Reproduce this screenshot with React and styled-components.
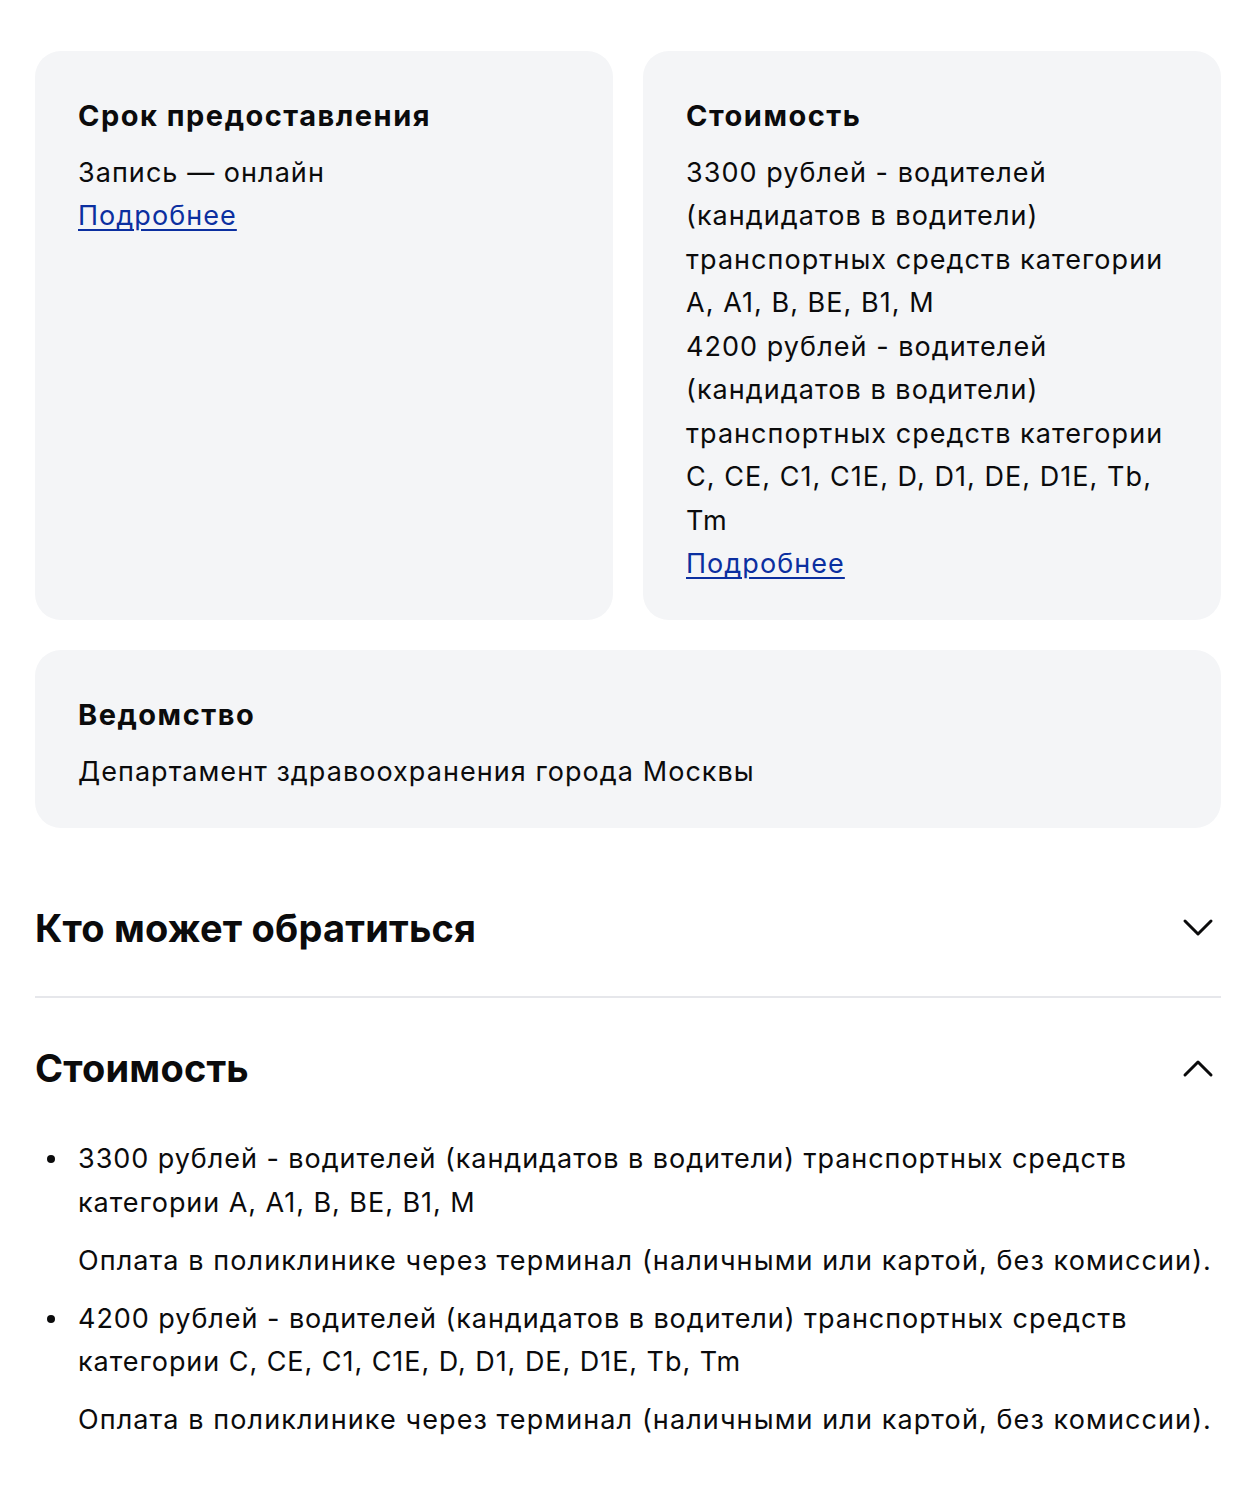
import React from "react";
import styled, { createGlobalStyle } from "styled-components";

const Global = createGlobalStyle`
  html, body { margin: 0; padding: 0; background: #ffffff; }
  body { font-family: Inter, "Noto Sans", "DejaVu Sans", sans-serif; color: #0b0b0c; }
  * { box-sizing: border-box; }
`;

const Page = styled.main`
  width: 1186px;
  margin: 0 0 0 35px;
  padding: 51px 0 40px;
`;

const Grid = styled.div`
  display: grid;
  grid-template-columns: 1fr 1fr;
  gap: 30px;
`;

const Card = styled.section`
  background: #f4f5f7;
  border-radius: 26px;
  padding: 43px 43px 34.8px;
  grid-column: ${(p) => (p.$wide ? "1 / -1" : "auto")};
`;

const CardTitle = styled.h3`
  margin: 0 0 13px;
  font-size: 29px;
  line-height: 43.5px;
  font-weight: 700;
  letter-spacing: 1.5px;
  color: #0b0b0c;
`;

const Text = styled.div`
  font-size: 27px;
  line-height: 43.5px;
  font-weight: 400;
  letter-spacing: 1.05px;
  color: #0b0b0c;
`;

const Link = styled.a`
  color: #0b2fa0;
  text-decoration: underline;
  text-underline-offset: 4px;
  text-decoration-thickness: 2px;
  cursor: pointer;
`;

const Accordion = styled.div`
  margin-top: 30px;
`;

const Item = styled.div`
  border-bottom: ${(p) => (p.$divider ? "2px solid #e6e7eb" : "none")};
`;

const Header = styled.div`
  display: flex;
  align-items: center;
  justify-content: space-between;
  padding: 44px 0 42px;
`;

const Heading = styled.h2`
  margin: 0;
  font-size: 38px;
  line-height: 52px;
  font-weight: 700;
  letter-spacing: 0.2px;
  color: #0b0b0c;
`;

const Chevron = styled.svg`
  width: 36px;
  height: 36px;
  margin-right: 5px;
  flex: none;
`;

const List = styled.ul`
  margin: 1px 0 0;
  padding: 0 0 0 43px;
  list-style: none;
`;

const ListItem = styled.li`
  position: relative;
  font-size: 27px;
  line-height: 43.5px;
  letter-spacing: 0.95px;
  margin-bottom: 14.5px;
  &::before {
    content: "";
    position: absolute;
    left: -31px;
    top: 18px;
    width: 8px;
    height: 8px;
    border-radius: 50%;
    background: #0b0b0c;
  }
`;

const Note = styled.p`
  margin: 14.5px 0 0;
  font-size: 27px;
  line-height: 43.5px;
  letter-spacing: 1.1px;
`;

const Icon = ({ up }) => (
  <Chevron viewBox="0 0 36 36" fill="none">
    <polyline
      points={up ? "5,25 18,12 31,25" : "5,11 18,24 31,11"}
      stroke="#0b0b0c"
      strokeWidth="3"
      strokeLinecap="round"
      strokeLinejoin="round"
    />
  </Chevron>
);

export default function App() {
  return (
    <>
      <Global />
      <Page>
        <Grid>
          <Card>
            <CardTitle>Срок предоставления</CardTitle>
            <Text>Запись — онлайн</Text>
            <Text><Link>Подробнее</Link></Text>
          </Card>
          <Card>
            <CardTitle>Стоимость</CardTitle>
            <Text>
              3300 рублей - водителей (кандидатов в водители) транспортных средств категории A, A1, B, BE, B1, M
            </Text>
            <Text>
              4200 рублей - водителей (кандидатов в водители) транспортных средств категории C, CE, C1, C1E, D, D1, DE, D1E, Tb, Tm
            </Text>
            <Text><Link>Подробнее</Link></Text>
          </Card>
          <Card $wide>
            <CardTitle>Ведомство</CardTitle>
            <Text>Департамент здравоохранения города Москвы</Text>
          </Card>
        </Grid>
        <Accordion>
          <Item $divider>
            <Header>
              <Heading>Кто может обратиться</Heading>
              <Icon />
            </Header>
          </Item>
          <Item>
            <Header>
              <Heading>Стоимость</Heading>
              <Icon up />
            </Header>
            <List>
              <ListItem>
                3300 рублей - водителей (кандидатов в водители) транспортных средств категории A, A1, B, BE, B1, M
                <Note>Оплата в поликлинике через терминал (наличными или картой, без комиссии).</Note>
              </ListItem>
              <ListItem>
                4200 рублей - водителей (кандидатов в водители) транспортных средств категории C, CE, C1, C1E, D, D1, DE, D1E, Tb, Tm
                <Note>Оплата в поликлинике через терминал (наличными или картой, без комиссии).</Note>
              </ListItem>
            </List>
          </Item>
        </Accordion>
      </Page>
    </>
  );
}
